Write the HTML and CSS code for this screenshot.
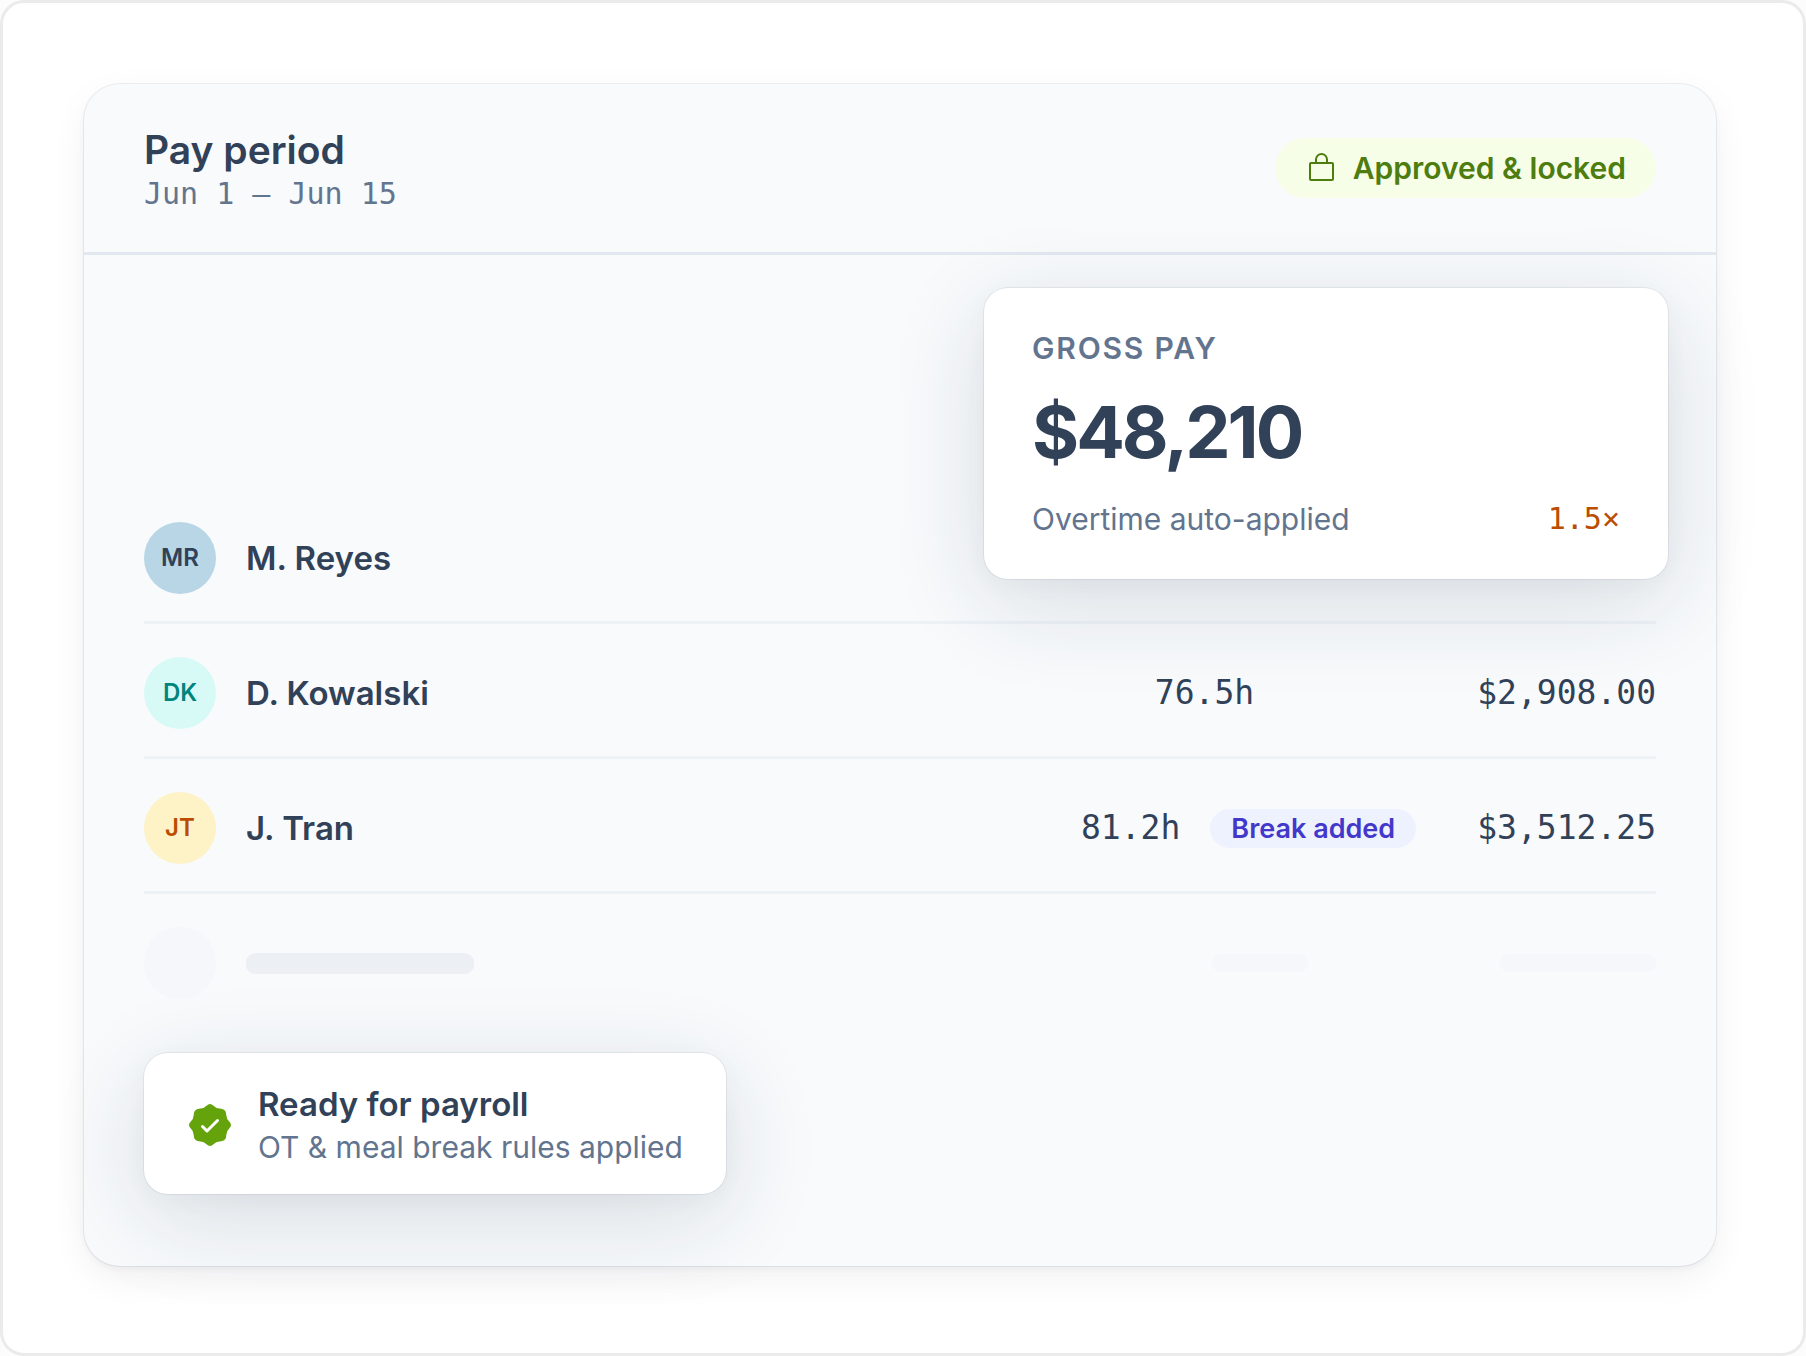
FILE: index.html
```html
<!DOCTYPE html>
<html lang="en">
  <head>
    <meta charset="UTF-8" />
    <meta name="viewport" content="width=device-width, initial-scale=1.0" />
    <title>Pay period</title>
    <link rel="stylesheet" href="styles.css" />
  </head>
  <body>
    <main class="frame">
      <section class="sheet">
        <header class="sheet-header">
          <div class="period">
            <h1>Pay period</h1>
            <p class="dates">Jun 1 – Jun 15</p>
          </div>
          <p class="status">
            <svg class="lock" viewBox="0 0 36 36" aria-hidden="true">
              <rect x="7" y="13" width="23" height="17" rx="1" />
              <path d="M13 13V9.500a5.500 5.500 0 0 1 11 0V13" />
            </svg>
            Approved &amp; locked
          </p>
        </header>

        <div class="sheet-body">
          <table>
            <tbody>
              <tr>
                <td>
                  <div class="person">
                    <span class="avatar blue">MR</span>
                    <span>M. Reyes</span>
                  </div>
                </td>
                <td class="hours"></td>
                <td class="amount"></td>
              </tr>
              <tr>
                <td>
                  <div class="person">
                    <span class="avatar teal">DK</span>
                    <span>D. Kowalski</span>
                  </div>
                </td>
                <td class="hours plain">76.5h</td>
                <td class="amount">$2,908.00</td>
              </tr>
              <tr>
                <td>
                  <div class="person">
                    <span class="avatar amber">JT</span>
                    <span>J. Tran</span>
                  </div>
                </td>
                <td class="hours">
                  <div class="hours-note">
                    81.2h
                    <span class="tag">Break added</span>
                  </div>
                </td>
                <td class="amount">$3,512.25</td>
              </tr>
              <tr class="loading" aria-hidden="true">
                <td>
                  <div class="person">
                    <span class="avatar"></span>
                    <span class="bar bar-name"></span>
                  </div>
                </td>
                <td class="hours"><span class="bar bar-hours"></span></td>
                <td class="amount"><span class="bar bar-amount"></span></td>
              </tr>
            </tbody>
          </table>

          <aside class="ready">
            <svg class="badge" viewBox="0 0 48 48" aria-hidden="true">
              <path
                class="seal"
                d="M20.500 4.800Q24 1.200 27.500 4.800Q30 7.500 33.500 7.600Q40.400 7.600 40.400 14.500Q40.500 18 43.200 20.500Q46.800 24 43.200 27.500Q40.500 30 40.400 33.500Q40.400 40.400 33.500 40.400Q30 40.500 27.500 43.200Q24 46.800 20.500 43.200Q18 40.500 14.500 40.400Q7.600 40.400 7.600 33.500Q7.500 30 4.800 27.500Q1.200 24 4.800 20.500Q7.500 18 7.600 14.500Q7.600 7.600 14.500 7.600Q18 7.500 20.500 4.800Z"
              />
              <path class="tick" d="M16.500 25.500l4.500 4.500L31.500 19.500" />
            </svg>
            <div>
              <h2>Ready for payroll</h2>
              <p>OT &amp; meal break rules applied</p>
            </div>
          </aside>

          <aside class="gross">
            <h2>Gross pay</h2>
            <p class="total">$48,210</p>
            <div class="overtime">
              <span>Overtime auto-applied</span>
              <span class="rate">1.5×</span>
            </div>
          </aside>
        </div>
      </section>
    </main>
  </body>
</html>
```
FILE: styles.css
```css
* {
  margin: 0;
  padding: 0;
  box-sizing: border-box;
}

body {
  background-color: #fcfcfc;
  color: #314158;
  font-family: Inter, "Liberation Sans", sans-serif;
  font-size: 30px;
  line-height: 36px;
}

.frame {
  min-height: 100vh;
  padding: 81px 87px 87px 81px;
  border: 3px solid #ebebeb;
  border-radius: 24px;
  background-color: white;
}

.sheet {
  border-radius: 36px;
  background-color: #f8fafc;
  box-shadow: 0 0 0 1px rgba(49, 65, 88, 0.08),
    0 3px 6px rgba(15, 23, 43, 0.04), 0 12px 36px rgba(15, 23, 43, 0.06);
}

.sheet-header {
  display: flex;
  justify-content: space-between;
  align-items: center;
  min-height: 171px;
  padding: 0 60px;
  border-bottom: 3px solid #e2e8f0;
}

.period {
  padding-top: 3px;
}

h1 {
  font-size: 39px;
  line-height: 48px;
  font-weight: 600;
}

.dates,
.rate,
.hours,
.amount {
  font-family: "DejaVu Sans Mono", "Liberation Mono", monospace;
}

.dates {
  color: #62748e;
  line-height: 39px;
}

.status {
  display: flex;
  align-items: center;
  gap: 14px;
  height: 60px;
  padding: 0 30px 0 28px;
  border-radius: 30px;
  background-color: #f7fee7;
  color: #4d7c0f;
  font-weight: 600;
}

.lock {
  width: 36px;
  height: 36px;
  fill: none;
  stroke: #4d7c0f;
  stroke-width: 2;
}

.sheet-body {
  position: relative;
  padding: 234px 60px 72px;
}

table {
  width: 100%;
  border-spacing: 0;
  font-size: 33px;
}

td {
  height: 135px;
  padding: 33px 0 27px;
  border-bottom: 3px solid #edf2f7;
  white-space: nowrap;
}

.person {
  display: flex;
  align-items: center;
  gap: 30px;
  font-weight: 600;
}

.avatar {
  display: grid;
  place-items: center;
  width: 72px;
  height: 72px;
  border-radius: 50%;
  font-size: 24px;
}

.blue {
  background-color: #b8d6e6;
}

.teal {
  background-color: #d7faf6;
  color: #00857c;
}

.amber {
  background-color: #fef2c7;
  color: #bb4d00;
}

.hours,
.amount {
  width: 1px;
  text-align: right;
}

.hours {
  padding-right: 61px;
}

.hours.plain {
  padding-right: 223px;
}

.hours-note {
  display: flex;
  align-items: center;
  gap: 30px;
}

.tag {
  padding: 0 21px;
  border-radius: 20px;
  background-color: #eef2ff;
  color: #4338ca;
  font-family: Inter, "Liberation Sans", sans-serif;
  font-size: 27px;
  line-height: 39px;
  font-weight: 600;
}

.loading td {
  border-bottom-color: transparent;
}

.loading .avatar,
.bar {
  background-color: #f5f7fb;
}

.bar {
  display: block;
  height: 18px;
  margin-left: auto;
  border-radius: 9px;
}

.bar-name {
  width: 228px;
  height: 21px;
  margin-left: 0;
  background-color: #ecf0f5;
}

.bar-hours {
  width: 96px;
}

.loading .hours {
  padding-right: 169px;
}

.bar-amount {
  width: 156px;
}

.ready,
.gross {
  border-radius: 24px;
  background-color: white;
  box-shadow: 0 0 0 1px rgba(49, 65, 88, 0.08),
    0 24px 96px rgba(30, 50, 70, 0.14), 0 6px 24px rgba(30, 50, 70, 0.03);
}

.ready {
  display: flex;
  align-items: center;
  gap: 24px;
  width: fit-content;
  margin-top: 24px;
  padding: 30px 43px 27px 42px;
  color: #62748e;
}

.ready h2 {
  color: #314158;
  font-size: 33px;
  line-height: 42px;
  font-weight: 600;
}

.ready p {
  margin-top: 3px;
  line-height: 39px;
}

.badge {
  width: 48px;
  height: 48px;
}

.seal {
  fill: #65a30d;
}

.tick {
  fill: none;
  stroke: white;
  stroke-width: 3;
  stroke-linecap: round;
  stroke-linejoin: round;
}

/* floats over the first rows of the table */
.gross {
  position: absolute;
  top: 33px;
  right: 48px;
  width: 684px;
  padding: 42px 48px;
  color: #62748e;
}

.gross h2 {
  font-size: 30px;
  font-weight: 600;
  letter-spacing: 0.06em;
  text-transform: uppercase;
}

.total {
  margin: 30px 0 33px;
  color: #314158;
  font-size: 72px;
  line-height: 72px;
  font-weight: 700;
  letter-spacing: -3px;
}

.overtime {
  display: flex;
  justify-content: space-between;
}

.rate {
  color: #bb4d00;
}
```
